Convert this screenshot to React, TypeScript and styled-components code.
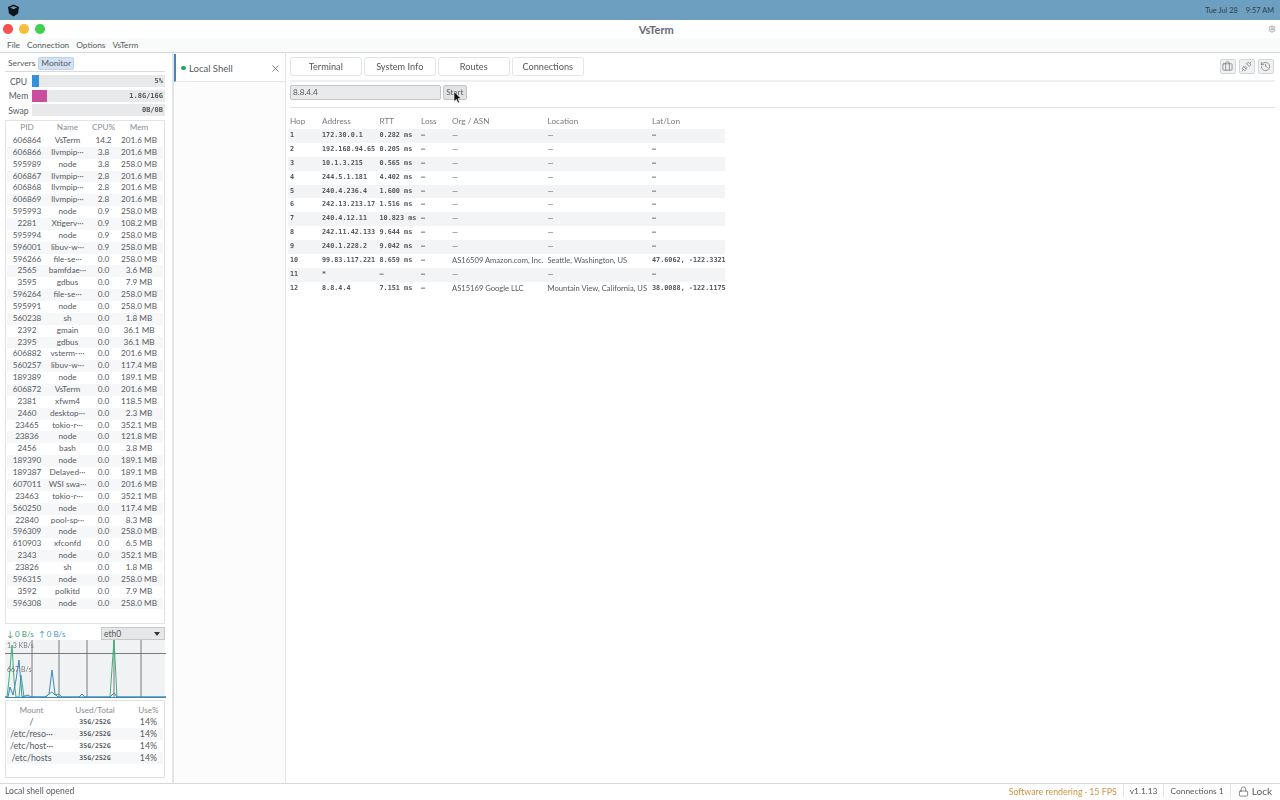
import { createGlobalStyle, styled } from "styled-components";
import { Briefcase, History, Lock, Settings, Unplug, X } from "lucide-react";

const GlobalStyle = createGlobalStyle`
  html, body {
    margin: 0;
    padding: 0;
    background: #ffffff;
    overflow: hidden;
  }
  * { box-sizing: border-box; }
`;

const SANS = `Lato, "Noto Sans", sans-serif`;
const MONO = `"DejaVu Sans Mono", "Liberation Mono", monospace`;

const Page = styled.div`
  position: relative;
  width: 1280px;
  height: 800px;
  display: flex;
  flex-direction: column;
  font-family: ${SANS};
  color: #555a60;
  overflow: hidden;
  filter: blur(0.3px);
`;

const DesktopBar = styled.div`
  height: 20px;
  flex: none;
  background: #6d9fc0;
  display: flex;
  align-items: center;
  justify-content: space-between;
  padding: 0 6px 0 7px;
  font-size: 7.4px;
  color: #2e3f4c;
`;

const Clock = styled.div`
  display: flex;
  gap: 8px;
`;

const TitleBar = styled.div`
  height: 18px;
  flex: none;
  background: #ffffff;
  display: flex;
  align-items: center;
  padding: 0 4px 0 3px;
`;

const Lights = styled.div`
  display: flex;
  gap: 6.5px;
`;

const Light = styled.span<{ $color: string }>`
  width: 9.5px;
  height: 9.5px;
  border-radius: 50%;
  background: ${(p) => p.$color};
`;

const WindowTitle = styled.div`
  flex: 1;
  text-align: center;
  font-size: 11px;
  font-weight: 700;
  color: #666a70;
`;

const MenuBar = styled.div`
  height: 15px;
  flex: none;
  background: #f9fafa;
  border-bottom: 1px solid #d6d8da;
  display: flex;
  align-items: center;
  gap: 7px;
  padding: 0 7px;
  font-size: 8.3px;
`;

const Body = styled.div`
  flex: 1;
  min-height: 0;
  display: flex;
`;

const Sidebar = styled.aside`
  width: 174px;
  flex: none;
  background: #ffffff;
  border-right: 2px solid #e4e5e7;
  padding: 4px 7px 4px 5px;
  display: flex;
  flex-direction: column;
`;

const SideTabs = styled.div`
  display: flex;
  align-items: center;
  gap: 0;
  height: 15px;
  font-size: 8.4px;
  border-bottom: 1px solid #d8dadc;
  padding-bottom: 2px;
`;

const SideTab = styled.span<{ $active?: boolean }>`
  padding: 0 2px;
  height: 13px;
  line-height: 11px;
  border-radius: 2px;
  background: ${(p) => (p.$active ? "#d3e2f3" : "transparent")};
  border: 1px solid ${(p) => (p.$active ? "#bdd2e8" : "transparent")};
`;

const Meters = styled.div`
  display: flex;
  flex-direction: column;
  gap: 2.5px;
  margin-top: 3px;
`;

const MeterRow = styled.div`
  display: flex;
  align-items: center;
  height: 12px;
  font-size: 8.6px;
`;

const MeterLabel = styled.span`
  width: 27px;
  padding-top: 1px;
  text-align: center;
`;

const MeterTrack = styled.div`
  position: relative;
  flex: 1;
  height: 12px;
  background: #e8e9ea;
`;

const MeterFill = styled.div<{ $color: string }>`
  height: 100%;
  background: ${(p) => p.$color};
`;

const MeterValue = styled.span`
  position: absolute;
  right: 2px;
  top: 0;
  line-height: 12px;
  font-family: ${MONO};
  font-size: 7px;
  font-weight: 700;
  color: #55585c;
`;

const ProcessPanel = styled.div`
  height: 504px;
  margin-top: 4px;
  border: 1px solid #e0e2e4;
  padding: 1px 1px 0;
  flex: none;
`;

const ProcessRow = styled.div<{ $stripe?: boolean }>`
  display: grid;
  grid-template-columns: 40px 41px 31px 1fr;
  height: 11.87px;
  line-height: 11.87px;
  font-size: 8.2px;
  text-align: center;
  padding-right: 4px;
  background: ${(p) => (p.$stripe ? "#f6f7f8" : "transparent")};
`;

const HeadRow = styled(ProcessRow)`
  height: 13px;
  color: #8a8e92;
`;

const NetRow = styled.div`
  height: 13px;
  margin-top: 3px;
  display: flex;
  align-items: center;
  justify-content: space-between;
  font-size: 8px;
  padding-left: 2px;
`;

const NetRates = styled.div`
  display: flex;
  gap: 5px;
`;

const Down = styled.span`
  color: #3c9a6a;
`;

const Up = styled.span`
  color: #4a90c8;
`;

const NetSelect = styled.div`
  width: 64px;
  height: 13px;
  background: #e6e7e8;
  border: 1px solid #c6c8ca;
  display: flex;
  align-items: center;
  justify-content: space-between;
  padding: 0 4px 0 2px;
  font-size: 8.5px;
`;

const Caret = styled.span`
  width: 0;
  height: 0;
  border-left: 3px solid transparent;
  border-right: 3px solid transparent;
  border-top: 4px solid #333333;
`;

const ChartBox = styled.div`
  position: relative;
  height: 58px;
  flex: none;
  background: #f1f2f3;
`;

const ChartLabel = styled.span<{ $top: number }>`
  position: absolute;
  left: 2px;
  top: ${(p) => p.$top}px;
  font-size: 7px;
  line-height: 9px;
  color: #777b80;
`;

const MountPanel = styled.div`
  height: 78px;
  margin-top: 2px;
  flex: none;
  border: 1px solid #e0e2e4;
  padding: 2.5px 1px 0;
`;

const MountRow = styled.div<{ $stripe?: boolean }>`
  display: grid;
  grid-template-columns: 49px 78px 1fr;
  height: 12px;
  line-height: 12px;
  font-size: 8.8px;
  text-align: center;
  background: ${(p) => (p.$stripe ? "#f6f7f8" : "transparent")};
`;

const MountHead = styled(MountRow)`
  font-size: 8.2px;
  color: #8a8e92;
`;

const MonoCell = styled.span`
  font-family: ${MONO};
  font-size: 6.5px;
  font-weight: 700;
`;

const SessionList = styled.div`
  width: 112px;
  flex: none;
  background: #fcfcfc;
  border-right: 1px solid #e4e5e7;
`;

const SessionTab = styled.div`
  height: 28px;
  margin-top: 1px;
  padding: 1px 4px 0 5px;
  background: #ffffff;
  border-left: 2px solid #4a7fc0;
  border-bottom: 1px solid #e6e7e8;
  display: flex;
  align-items: center;
  font-size: 9.5px;
  gap: 3.5px;
`;

const StatusDot = styled.span`
  width: 4.5px;
  height: 4.5px;
  border-radius: 50%;
  background: #23a55f;
`;

const SessionName = styled.span`
  flex: 1;
`;

const Content = styled.main`
  flex: 1;
  min-width: 0;
  padding: 3px 5px 0 4px;
`;

const TabStrip = styled.div`
  display: flex;
  align-items: center;
  height: 26px;
  padding-bottom: 4px;
  gap: 2px;
  border-bottom: 2px solid #eeeff0;
  justify-content: space-between;
`;

const ViewTabs = styled.div`
  display: flex;
  gap: 2.5px;
`;

const ViewTab = styled.div`
  width: 71.5px;
  height: 19px;
  border: 1px solid #e2e3e5;
  border-radius: 3px;
  background: #ffffff;
  display: flex;
  align-items: center;
  justify-content: center;
  font-size: 9.2px;
  color: #55585c;
`;

const Tools = styled.div`
  display: flex;
  gap: 2.5px;
  margin-right: 1px;
`;

const ToolButton = styled.div`
  width: 16.5px;
  height: 15px;
  border: 1px solid #d4d6d8;
  border-radius: 2px;
  background: #f0f1f2;
  display: flex;
  align-items: center;
  justify-content: center;
  color: #6a6e72;
`;

const QueryRow = styled.div`
  display: flex;
  gap: 2px;
  margin-top: 3px;
  padding-bottom: 6.5px;
  border-bottom: 1px solid #dfe0e2;
`;

const HostInput = styled.div`
  width: 151px;
  height: 15px;
  background: #e9eaeb;
  border: 1px solid #c2c4c6;
  border-radius: 2px;
  line-height: 13px;
  padding-left: 2px;
  font-size: 8.2px;
`;

const StartButton = styled.div`
  width: 23.5px;
  height: 15px;
  background: #e2e3e4;
  border: 1px solid #c2c4c6;
  border-radius: 2px;
  line-height: 13px;
  text-align: center;
  font-size: 8.2px;
`;

const HopTable = styled.div`
  width: 437px;
  margin: 7px 0 0 -2px;
`;

const HopRow = styled.div<{ $stripe?: boolean }>`
  display: grid;
  grid-template-columns: 32px 57.5px 41.5px 31px 95.5px 104.5px 1fr;
  height: 13.9px;
  line-height: 13.9px;
  padding-left: 2px;
  font-size: 7.6px;
  white-space: nowrap;
  background: ${(p) => (p.$stripe ? "#f3f4f5" : "transparent")};
`;

const HopHead = styled(HopRow)`
  height: 14.5px;
  font-size: 8.2px;
  color: #777b80;
`;

const Mono = styled.span`
  font-family: ${MONO};
  font-size: 6.8px;
  font-weight: 600;
  color: #55585c;
`;

const Cursor = styled.svg`
  position: absolute;
  left: 453px;
  top: 91px;
`;

const StatusBar = styled.footer`
  height: 17px;
  flex: none;
  border-top: 1px solid #d6d8da;
  display: flex;
  align-items: center;
  justify-content: space-between;
  padding: 0 8px 2px 5px;
  font-size: 8.6px;
`;

const StatusRight = styled.div`
  display: flex;
  align-items: center;
  height: 100%;
`;

const StatusCell = styled.span<{ $warn?: boolean }>`
  display: flex;
  align-items: center;
  gap: 3px;
  height: 100%;
  padding: 0 6px;
  font-size: ${(p) => (p.$warn ? "8.8px" : "8.4px")};
  border-left: 1px solid #e4e5e7;
  color: ${(p) => (p.$warn ? "#cf9245" : "#55585c")};
  &:first-child {
    border-left: none;
  }
`;

const LockCell = styled(StatusCell)`
  padding: 0 0 0 7px;
  font-size: 10px;
  gap: 3px;
`;

const procs: [string, string, string, string][] = [
  ["606864", "VsTerm", "14.2", "201.6 MB"],
  ["606866", "llvmpip···", "3.8", "201.6 MB"],
  ["595989", "node", "3.8", "258.0 MB"],
  ["606867", "llvmpip···", "2.8", "201.6 MB"],
  ["606868", "llvmpip···", "2.8", "201.6 MB"],
  ["606869", "llvmpip···", "2.8", "201.6 MB"],
  ["595993", "node", "0.9", "258.0 MB"],
  ["2281", "Xtigerv···", "0.9", "108.2 MB"],
  ["595994", "node", "0.9", "258.0 MB"],
  ["596001", "libuv-w···", "0.9", "258.0 MB"],
  ["596266", "file-se···", "0.0", "258.0 MB"],
  ["2565", "bamfdae···", "0.0", "3.6 MB"],
  ["3595", "gdbus", "0.0", "7.9 MB"],
  ["596264", "file-se···", "0.0", "258.0 MB"],
  ["595991", "node", "0.0", "258.0 MB"],
  ["560238", "sh", "0.0", "1.8 MB"],
  ["2392", "gmain", "0.0", "36.1 MB"],
  ["2395", "gdbus", "0.0", "36.1 MB"],
  ["606882", "vsterm-···", "0.0", "201.6 MB"],
  ["560257", "libuv-w···", "0.0", "117.4 MB"],
  ["189389", "node", "0.0", "189.1 MB"],
  ["606872", "VsTerm", "0.0", "201.6 MB"],
  ["2381", "xfwm4", "0.0", "118.5 MB"],
  ["2460", "desktop···", "0.0", "2.3 MB"],
  ["23465", "tokio-r···", "0.0", "352.1 MB"],
  ["23836", "node", "0.0", "121.8 MB"],
  ["2456", "bash", "0.0", "3.8 MB"],
  ["189390", "node", "0.0", "189.1 MB"],
  ["189387", "Delayed···", "0.0", "189.1 MB"],
  ["607011", "WSI swa···", "0.0", "201.6 MB"],
  ["23463", "tokio-r···", "0.0", "352.1 MB"],
  ["560250", "node", "0.0", "117.4 MB"],
  ["22840", "pool-sp···", "0.0", "8.3 MB"],
  ["596309", "node", "0.0", "258.0 MB"],
  ["610903", "xfconfd", "0.0", "6.5 MB"],
  ["2343", "node", "0.0", "352.1 MB"],
  ["23826", "sh", "0.0", "1.8 MB"],
  ["596315", "node", "0.0", "258.0 MB"],
  ["3592", "polkitd", "0.0", "7.9 MB"],
  ["596308", "node", "0.0", "258.0 MB"],
];

const hops = [
  ["1", "172.30.0.1", "0.282 ms", "—", "—", "—", "—"],
  ["2", "192.168.94.65", "0.205 ms", "—", "—", "—", "—"],
  ["3", "10.1.3.215", "0.565 ms", "—", "—", "—", "—"],
  ["4", "244.5.1.181", "4.402 ms", "—", "—", "—", "—"],
  ["5", "240.4.236.4", "1.600 ms", "—", "—", "—", "—"],
  ["6", "242.13.213.17", "1.516 ms", "—", "—", "—", "—"],
  ["7", "240.4.12.11", "10.823 ms", "—", "—", "—", "—"],
  ["8", "242.11.42.133", "9.644 ms", "—", "—", "—", "—"],
  ["9", "240.1.228.2", "9.042 ms", "—", "—", "—", "—"],
  ["10", "99.83.117.221", "8.659 ms", "—", "AS16509 Amazon.com, Inc.", "Seattle, Washington, US", "47.6062, -122.3321"],
  ["11", "*", "—", "—", "—", "—", "—"],
  ["12", "8.8.4.4", "7.151 ms", "—", "AS15169 Google LLC", "Mountain View, California, US", "38.0088, -122.1175"],
];

const mounts = [
  ["/", "35G/252G", "14%"],
  ["/etc/reso···", "35G/252G", "14%"],
  ["/etc/host···", "35G/252G", "14%"],
  ["/etc/hosts", "35G/252G", "14%"],
];

function NetChart() {
  const green = "0,57 2,57 4,40 7,5 9,40 11,57 14,57 16,35 19,57 41,57 44,54 47,52 50,55 54,54 57,57 105,57 109,0 112,57 161,57";
  const blue = "0,57 3,57 5,47 8,55 11,40 14,20 17,57 23,55 26,57 40,57 44,54 47,30 50,54 53,57 74,57 77,54 80,57 105,57 109,53 112,57 161,57";
  return (
    <svg width="161" height="58" viewBox="0 0 161 58">
      <g stroke="#5a5e62" strokeWidth="0.8">
        <line x1="27" y1="0" x2="27" y2="58" />
        <line x1="54" y1="0" x2="54" y2="58" />
        <line x1="82" y1="0" x2="82" y2="58" />
        <line x1="109" y1="0" x2="109" y2="58" />
        <line x1="136" y1="0" x2="136" y2="58" />
        <line x1="0" y1="13.5" x2="161" y2="13.5" />
      </g>
      <polyline points={green} fill="none" stroke="#3faf7a" strokeWidth="1" />
      <polyline points={blue} fill="none" stroke="#3f86c6" strokeWidth="1" />
      <line x1="0" y1="57.5" x2="161" y2="57.5" stroke="#3f86c6" strokeWidth="1.2" />
    </svg>
  );
}

export default function App() {
  return (
    <Page>
      <GlobalStyle />
      <DesktopBar>
        <svg width="13" height="13" viewBox="0 0 13 13">
          <path d="M6.5 0.5 L12 3 L11 9.5 L6.5 12.5 L2 9.5 L1 3 Z" fill="#10151a" />
          <path d="M3 3.6 L6.5 5.2 L10 3.6 L6.5 2.2 Z" fill="#6d9fc0" />
        </svg>
        <Clock>
          <span>Tue Jul 28</span>
          <span>9:57 AM</span>
        </Clock>
      </DesktopBar>
      <TitleBar>
        <Lights>
          <Light $color="#f8504f" />
          <Light $color="#f9bd3c" />
          <Light $color="#3fd04f" />
        </Lights>
        <WindowTitle>VsTerm</WindowTitle>
        <Settings size={8} color="#aaaaaa" strokeWidth={3} />
      </TitleBar>
      <MenuBar>
        <span>File</span>
        <span>Connection</span>
        <span>Options</span>
        <span>VsTerm</span>
      </MenuBar>
      <Body>
        <Sidebar>
          <SideTabs>
            <SideTab>Servers</SideTab>
            <SideTab $active>Monitor</SideTab>
          </SideTabs>
          <Meters>
            <MeterRow>
              <MeterLabel>CPU</MeterLabel>
              <MeterTrack>
                <MeterFill $color="#3590d8" style={{ width: "5%" }} />
                <MeterValue>5%</MeterValue>
              </MeterTrack>
            </MeterRow>
            <MeterRow>
              <MeterLabel>Mem</MeterLabel>
              <MeterTrack>
                <MeterFill $color="#c94f9e" style={{ width: "11%" }} />
                <MeterValue>1.8G/16G</MeterValue>
              </MeterTrack>
            </MeterRow>
            <MeterRow>
              <MeterLabel>Swap</MeterLabel>
              <MeterTrack>
                <MeterValue>0B/0B</MeterValue>
              </MeterTrack>
            </MeterRow>
          </Meters>
          <ProcessPanel>
            <HeadRow>
              <span>PID</span>
              <span>Name</span>
              <span>CPU%</span>
              <span>Mem</span>
            </HeadRow>
            {procs.map((p, i) => (
              <ProcessRow key={p[0]} $stripe={i % 2 === 1}>
                <span>{p[0]}</span>
                <span>{p[1]}</span>
                <span>{p[2]}</span>
                <span>{p[3]}</span>
              </ProcessRow>
            ))}
          </ProcessPanel>
          <NetRow>
            <NetRates>
              <Down>↓ 0 B/s</Down>
              <Up>↑ 0 B/s</Up>
            </NetRates>
            <NetSelect>
              eth0
              <Caret />
            </NetSelect>
          </NetRow>
          <ChartBox>
            <NetChart />
            <ChartLabel $top={1}>1.3 KB/s</ChartLabel>
            <ChartLabel $top={25}>667 B/s</ChartLabel>
          </ChartBox>
          <MountPanel>
            <MountHead>
              <span>Mount</span>
              <span>Used/Total</span>
              <span>Use%</span>
            </MountHead>
            {mounts.map((m, i) => (
              <MountRow key={m[0]} $stripe={i % 2 === 1}>
                <span>{m[0]}</span>
                <MonoCell>{m[1]}</MonoCell>
                <span>{m[2]}</span>
              </MountRow>
            ))}
          </MountPanel>
        </Sidebar>
        <SessionList>
          <SessionTab>
            <StatusDot />
            <SessionName>Local Shell</SessionName>
            <X size={11} strokeWidth={1.5} />
          </SessionTab>
        </SessionList>
        <Content>
          <TabStrip>
            <ViewTabs>
              <ViewTab>Terminal</ViewTab>
              <ViewTab>System Info</ViewTab>
              <ViewTab>Routes</ViewTab>
              <ViewTab>Connections</ViewTab>
            </ViewTabs>
            <Tools>
              <ToolButton>
                <Briefcase size={11} strokeWidth={1.5} />
              </ToolButton>
              <ToolButton>
                <Unplug size={11} strokeWidth={1.5} />
              </ToolButton>
              <ToolButton>
                <History size={11} strokeWidth={1.5} />
              </ToolButton>
            </Tools>
          </TabStrip>
          <QueryRow>
            <HostInput>8.8.4.4</HostInput>
            <StartButton>Start</StartButton>
          </QueryRow>
          <HopTable>
            <HopHead>
              <span>Hop</span>
              <span>Address</span>
              <span>RTT</span>
              <span>Loss</span>
              <span>Org / ASN</span>
              <span>Location</span>
              <span>Lat/Lon</span>
            </HopHead>
            {hops.map((h, i) => (
              <HopRow key={h[0]} $stripe={i % 2 === 0}>
                <Mono>{h[0]}</Mono>
                <Mono>{h[1]}</Mono>
                <Mono>{h[2]}</Mono>
                <Mono>{h[3]}</Mono>
                <span>{h[4]}</span>
                <span>{h[5]}</span>
                <Mono>{h[6]}</Mono>
              </HopRow>
            ))}
          </HopTable>
        </Content>
      </Body>
      <StatusBar>
        <span>Local shell opened</span>
        <StatusRight>
          <StatusCell $warn>Software rendering · 15 FPS</StatusCell>
          <StatusCell>v1.1.13</StatusCell>
          <StatusCell>Connections 1</StatusCell>
          <LockCell>
            <Lock size={11} strokeWidth={1.5} />
            Lock
          </LockCell>
        </StatusRight>
      </StatusBar>
      <Cursor width="9" height="13" viewBox="0 0 9 13">
        <path d="M1 0.5 L1 10.5 L3.4 8.4 L5 12 L6.6 11.3 L5 7.8 L8 7.6 Z" fill="#111111" stroke="#ffffff" strokeWidth="0.6" />
      </Cursor>
    </Page>
  );
}
